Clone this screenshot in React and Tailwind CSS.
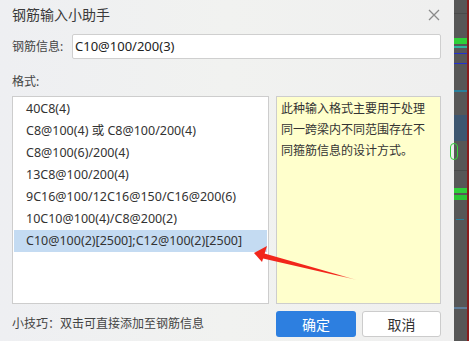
import React from 'react';

const formats = [
  '40C8(4)',
  'C8@100(4) 或 C8@100/200(4)',
  'C8@100(6)/200(4)',
  '13C8@100/200(4)',
  '9C16@100/12C16@150/C16@200(6)',
  '10C10@100(4)/C8@200(2)',
  'C10@100(2)[2500];C12@100(2)[2500]',
];

const font = { fontFamily: '"Noto Sans", "Noto Sans CJK SC", sans-serif' };

const App = () => {
  const selected = 6;

  return (
    <div className="relative flex h-[341px] w-[469px] overflow-hidden text-[#333]" style={font}>
      {/* dialog */}
      <div className="flex h-full w-[454px] flex-col bg-gradient-to-r from-[#eeeff2] via-[#f1f2f0] to-[#efefef] pl-[12px] pr-[13px]">
        {/* title bar */}
        <div className="flex h-[30px] items-center justify-between">
          <span className="text-[14px] leading-none tracking-[0px] text-[#3a3a3a]">钢筋输入小助手</span>
          <svg width="12" height="12" viewBox="0 0 12 12" className="mr-[1px]">
            <path d="M1 1 L11 11 M11 1 L1 11" stroke="#8a8a8a" strokeWidth="1.3" />
          </svg>
        </div>

        {/* input row */}
        <div className="mt-[4px] flex h-[25px] items-center">
          <span className="w-[60px] text-[12px] text-[#444]">钢筋信息:</span>
          <div className="flex h-full flex-1 items-center rounded-[2px] border border-[#cfcfcf] bg-white pl-[2px] text-[13px] text-[#222]">
            C10@100/200(3)
          </div>
        </div>

        <div className="mt-[15px] text-[12px] leading-[16px] text-[#444]">格式:</div>

        {/* main panels */}
        <div className="mt-[6px] flex h-[208px] gap-[7px]">
          <div className="w-[257px] border border-[#cdcdcd] bg-white pt-[1px]">
            {formats.map((f, i) => (
              <div
                key={i}
                className={`mx-[1px] flex h-[22px] items-center whitespace-nowrap pl-[12px] text-[12.5px] text-[#333] ${
                  i === selected ? 'bg-[#c4dbf2]' : ''
                }`}
              >
                {f}
              </div>
            ))}
          </div>
          <div className="flex-1 border border-[#cdcdcd] bg-[#ffffcc] pl-[4px] pr-[6px] pt-[1px] text-[12px] leading-[21px] text-[#333]">
            此种输入格式主要用于处理同一跨梁内不同范围存在不同箍筋信息的设计方式。
          </div>
        </div>

        {/* footer */}
        <div className="mt-[7px] flex h-[26px] items-center">
          <span className="flex-1 text-[12px] text-[#444]">小技巧：双击可直接添加至钢筋信息</span>
          <button className="h-full w-[80px] rounded-[3px] bg-[#2d7fe0] text-[14px] text-white">确定</button>
          <button className="ml-[6px] h-full w-[79px] rounded-[3px] border border-[#cccccc] bg-white text-[14px] text-[#333]">取消</button>
        </div>
      </div>

      {/* background app strip */}
      <div className="relative h-full flex-1 bg-[#575757]">
        <div className="absolute left-0 right-[2px] top-[13px] h-[1px] bg-[#4a4a4a]" />
        <div className="absolute left-0 right-[2px] top-[38px] h-[6px] bg-[#2ed03a]" />
        <div className="absolute left-0 right-[2px] top-[46px] h-[2px] bg-[#2bb8a0]" />
        <div className="absolute left-0 right-[2px] top-[53px] h-[1px] bg-[#2330d0]" />
        <div className="absolute left-0 right-[2px] top-[63px] h-[1px] bg-[#2330d0]" />
        <div className="absolute left-0 right-[2px] top-[90px] h-[2px] bg-[#2a7f9a]" />
        <div className="absolute left-0 right-[2px] top-[115px] h-[26px] bg-[#3d5670]" />
        <div className="absolute left-[-4px] top-[143px] h-[17px] w-[8px] rounded-full border border-[#35d03a]" />
        <div className="absolute left-0 right-[2px] top-[170px] h-[1px] bg-[#4a4a4a]" />
        <div className="absolute left-0 right-[2px] top-[188px] h-[5px] bg-[#2ed03a]" />
        <div className="absolute left-0 right-[2px] top-[195px] h-[5px] bg-[#2bc535]" />
        <div className="absolute left-[2px] w-[8px] top-[219px] h-[1px] bg-[#2a7f9a]" />
        <div className="absolute left-0 right-[2px] top-[307px] h-[2px] bg-[#5f7d99]" />
        <div className="absolute right-0 top-0 h-full w-[2px] bg-[#8a1c1c]" />
      </div>

      {/* annotation arrow */}
      <svg className="pointer-events-none absolute left-0 top-0" width="469" height="341">
        <defs>
          <linearGradient id="arrowFade" x1="255" y1="253" x2="357" y2="280" gradientUnits="userSpaceOnUse">
            <stop offset="0" stopColor="#f2261b" />
            <stop offset="0.8" stopColor="#f2261b" />
            <stop offset="1" stopColor="#f2261b" stopOpacity="0.2" />
          </linearGradient>
        </defs>
        <polygon points="261,252.5 263,258.5 357,280" fill="url(#arrowFade)" />
        <polygon points="254,253 267,246 262,262" fill="#f2261b" />
      </svg>
    </div>
  );
};

export default App;
